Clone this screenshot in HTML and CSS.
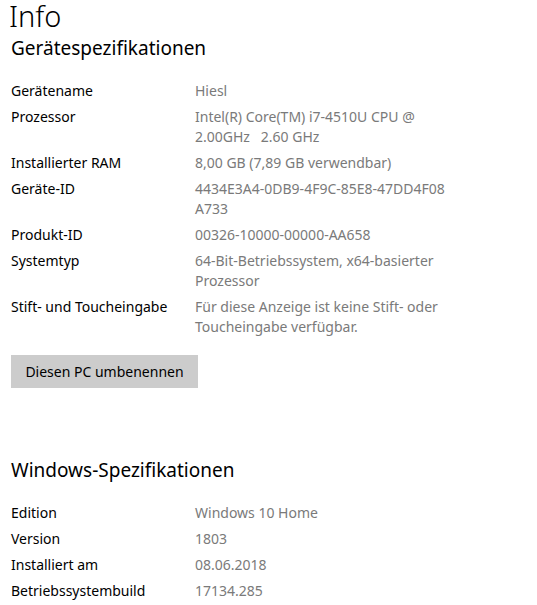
FILE: index.html
```html
<!DOCTYPE html>
<html lang="de">
<head>
<meta charset="utf-8">
<title>Info</title>
<link rel="stylesheet" href="styles.css">
</head>
<body>
<main class="page">
  <h1 class="title">Info</h1>
  <h2 class="section-title">Gerätespezifikationen</h2>
  <dl class="specs">
    <dt>Gerätename</dt><dd>Hiesl</dd>
    <dt>Prozessor</dt><dd>Intel(R) Core(TM) i7-4510U CPU @<br>2.00GHz&nbsp;&nbsp; 2.60 GHz</dd>
    <dt>Installierter RAM</dt><dd>8,00 GB (7,89 GB verwendbar)</dd>
    <dt>Geräte-ID</dt><dd>4434E3A4-0DB9-4F9C-85E8-47DD4F08<br>A733</dd>
    <dt>Produkt-ID</dt><dd>00326-10000-00000-AA658</dd>
    <dt>Systemtyp</dt><dd>64-Bit-Betriebssystem, x64-basierter<br>Prozessor</dd>
    <dt>Stift- und Toucheingabe</dt><dd>Für diese Anzeige ist keine Stift- oder<br>Toucheingabe verfügbar.</dd>
  </dl>
  <button class="rename" type="button">Diesen PC umbenennen</button>
  <h2 class="section-title section-title--windows">Windows-Spezifikationen</h2>
  <dl class="specs">
    <dt>Edition</dt><dd>Windows 10 Home</dd>
    <dt>Version</dt><dd>1803</dd>
    <dt>Installiert am</dt><dd>08.06.2018</dd>
    <dt>Betriebssystembuild</dt><dd>17134.285</dd>
  </dl>
</main>
</body>
</html>
```
FILE: styles.css
```css
html, body {
  margin: 0;
  padding: 0;
  background: #ffffff;
}
body {
  font-family: "Noto Sans", "Open Sans", sans-serif;
  color: #000;
}
.page {
  padding: 0 0 0 11px;
}
.title {
  margin: 0;
  font-size: 29px;
  font-weight: 300;
  line-height: 32px;
  margin-left: -2px;
}
.section-title {
  margin: 0;
  font-size: 19px;
  font-weight: 400;
  line-height: 32px;
}
.section-title--windows {
  margin-top: 66px;
}
.specs {
  display: grid;
  grid-template-columns: 184px 1fr;
  row-gap: 6px;
  margin: 17px 0 0 0;
  font-size: 14px;
  line-height: 20px;
}
.specs dt, .specs dd {
  margin: 0;
}
.specs dd {
  color: #7a7a7a;
}
.rename {
  display: block;
  margin-top: 18px;
  width: 187px;
  height: 33px;
  padding: 0;
  border: none;
  background: #cccccc;
  color: #000;
  font-family: inherit;
  font-size: 14px;
}
```
